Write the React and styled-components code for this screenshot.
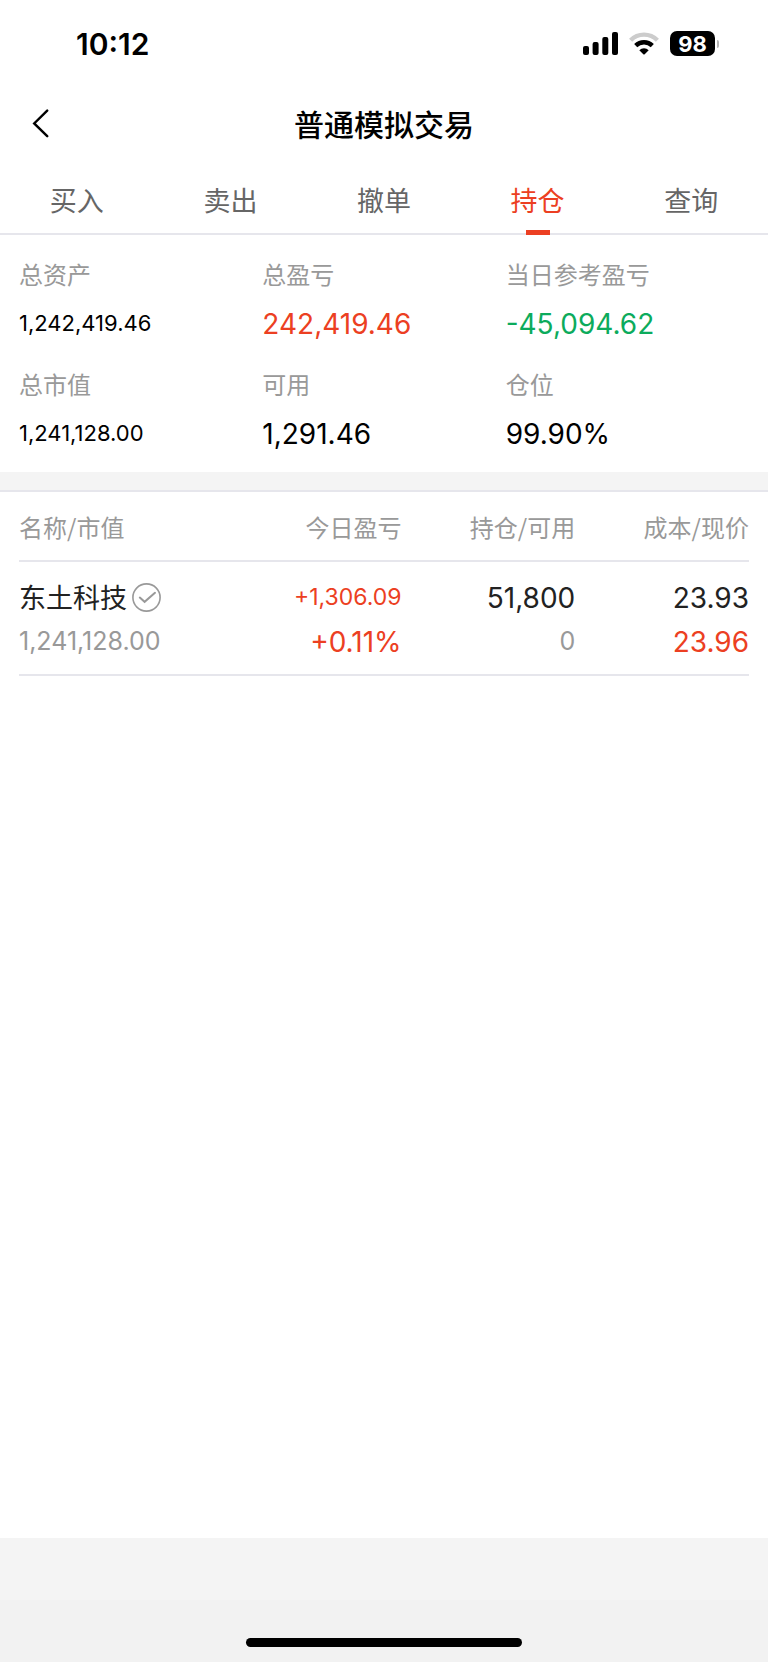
import React, { useState } from 'react';
import styled, { createGlobalStyle } from 'styled-components';

const colors = {
	red: '#ec3f22',
	green: '#0cab5c',
	line: '#e6e6ec',
	band: '#f4f4f4',
	gray: '#999',
	dark: '#222',
};

const GlobalStyle = createGlobalStyle`
	* {
		box-sizing: border-box;
	}

	body {
		margin: 0;
		background: #fff;
		font-family: Inter, 'Noto Sans CJK SC', sans-serif;
	}

	button {
		padding: 0;
		border: 0;
		background: none;
		font: inherit;
		color: inherit;
		cursor: pointer;
	}
`;

const Page = styled.div`
	display: flex;
	flex-direction: column;
	min-height: 100vh;
	color: #000;
`;

const StatusBar = styled.div`
	display: flex;
	align-items: center;
	justify-content: space-between;
	height: 87px;
	padding: 0 49px 0 76px;
`;

const Time = styled.span`
	font-size: 30px;
	font-weight: 600;
	line-height: 40px;
`;

const StatusIcons = styled.div`
	display: flex;
	align-items: center;
	gap: 11px;
`;

const Battery = styled.div`
	display: flex;
	align-items: center;
	gap: 2px;
`;

const BatteryLevel = styled.span`
	width: 45px;
	height: 25px;
	border-radius: 7px;
	background: #000;
	color: #fff;
	font-size: 22px;
	font-weight: 700;
	line-height: 26px;
	text-align: center;
`;

const BatteryTip = styled.span`
	width: 2px;
	height: 8px;
	border-radius: 0 2px 2px 0;
	background: #b4b4b4;
`;

const NavBar = styled.header`
	display: grid;
	grid-template-columns: 1fr auto 1fr;
	align-items: center;
	height: 76px;
	padding: 0 31px;
`;

const BackButton = styled.button`
	display: flex;
	justify-self: start;
`;

const Title = styled.h1`
	margin: 0;
	font-size: 30px;
	font-weight: 500;
	line-height: 40px;
`;

const Tabs = styled.nav`
	display: flex;
	border-bottom: 2px solid ${colors.line};
`;

const Tab = styled.button`
	position: relative;
	flex: 1;
	padding: 19px 0 11px;
	font-size: 27px;
	line-height: 40px;
	color: ${(props) => (props.$active ? colors.red : '#666')};

	&::after {
		content: '';
		display: ${(props) => (props.$active ? 'block' : 'none')};
		position: absolute;
		bottom: -2px;
		left: 50%;
		width: 24px;
		height: 5px;
		margin-left: -12px;
		background: ${colors.red};
	}
`;

const Summary = styled.dl`
	display: grid;
	grid-template-columns: repeat(3, 1fr);
	row-gap: 14px;
	margin: 0;
	padding: 19px 19px 12px;
`;

const Label = styled.dt`
	font-size: 24px;
	line-height: 44px;
	color: ${colors.gray};
`;

const Value = styled.dd`
	height: 52px;
	margin: 0;
	font-size: ${(props) => (props.$small ? 22 : 28)}px;
	line-height: ${(props) => (props.$small ? 50 : 52)}px;
	color: ${(props) => props.$color || '#000'};
`;

const Band = styled.div`
	height: 20px;
	border-bottom: 2px solid ${colors.line};
	background: ${colors.band};
`;

const Holdings = styled.main`
	flex: 1;
	padding: 0 19px;
`;

const Table = styled.table`
	width: 100%;
	border-collapse: separate;
	border-spacing: 0;
	table-layout: fixed;
`;

const HeadCell = styled.th`
	width: ${(props) => props.$width};
	padding: 13px 0 11px;
	border-bottom: 2px solid ${colors.line};
	font-family: 'Noto Sans CJK SC', sans-serif;
	font-size: 24px;
	font-weight: 400;
	line-height: 44px;
	color: ${colors.gray};
	text-align: right;

	&:first-child {
		text-align: left;
	}
`;

const Cell = styled.td`
	padding: 13px 0 11px;
	border-bottom: 2px solid ${colors.line};
	text-align: right;

	&:first-child {
		text-align: left;
	}
`;

const Line = styled.div`
	height: 44px;
	font-size: ${(props) => props.$size || 28}px;
	line-height: ${(props) => (props.$size ? 44 : 46)}px;
	color: ${(props) => props.$color || colors.dark};
`;

const StockName = styled.div`
	display: flex;
	gap: 5px;
	height: 44px;
	font-size: 27px;
	line-height: 48px;
	color: ${colors.dark};

	svg {
		align-self: center;
	}
`;

const Footer = styled.footer`
	padding-top: 62px;
	background: ${colors.band};
`;

const HomeArea = styled.div`
	display: flex;
	justify-content: center;
	align-items: flex-end;
	height: 62px;
	padding-bottom: 15px;
	background: #f2f2f2;
`;

const HomeIndicator = styled.div`
	width: 36%;
	height: 9px;
	border-radius: 5px;
	background: #000;
`;

const tabs = ['买入', '卖出', '撤单', '持仓', '查询'];

const summary = [
	{ label: '总资产', value: '1,242,419.46', small: true },
	{ label: '总盈亏', value: '242,419.46', color: colors.red },
	{ label: '当日参考盈亏', value: '-45,094.62', color: colors.green },
	{ label: '总市值', value: '1,241,128.00', small: true },
	{ label: '可用', value: '1,291.46' },
	{ label: '仓位', value: '99.90%' },
];

const holdings = [
	{
		name: '东土科技',
		marketValue: '1,241,128.00',
		profit: '+1,306.09',
		rate: '+0.11%',
		amount: '51,800',
		available: '0',
		cost: '23.93',
		price: '23.96',
	},
];

const SignalIcon = () => (
	<svg width='35' height='23' viewBox='0 0 35 23' aria-hidden='true'>
		<rect x='0' y='14' width='6' height='9' rx='2' />
		<rect x='9.6' y='10' width='6' height='13' rx='2' />
		<rect x='19.3' y='5' width='6' height='18' rx='2' />
		<rect x='29' y='0' width='6' height='23' rx='2' />
	</svg>
);

const WifiIcon = () => (
	<svg width='30' height='23' viewBox='0 0 30 23' fill='none' aria-hidden='true'>
		<path d='M1.6 8.2A19 19 0 0 1 28.4 8.2' stroke='#ccc' strokeWidth='4.4' />
		<path d='M6.7 13.6A11.8 11.8 0 0 1 23.3 13.6' stroke='#000' strokeWidth='4.4' />
		<path
			d='M10.3 18.2A6.8 6.8 0 0 1 19.7 18.2L15.7 22.2Q15 22.9 14.3 22.2Z'
			fill='#000'
		/>
	</svg>
);

const CheckIcon = () => (
	<svg
		width='29'
		height='29'
		viewBox='0 0 29 29'
		fill='none'
		stroke='#999'
		aria-hidden='true'>
		<circle cx='14.5' cy='14.5' r='13.6' strokeWidth='1.6' />
		<path d='M7.8 14.6L12.6 18.8L23 9.8' strokeWidth='2' strokeLinecap='round' />
	</svg>
);

const App = () => {
	const [active, setActive] = useState('持仓');

	return (
		<Page>
			<GlobalStyle />
			<StatusBar>
				<Time>10:12</Time>
				<StatusIcons>
					<SignalIcon />
					<WifiIcon />
					<Battery>
						<BatteryLevel>98</BatteryLevel>
						<BatteryTip />
					</Battery>
				</StatusIcons>
			</StatusBar>

			<NavBar>
				<BackButton type='button' aria-label='返回'>
					<svg width='18' height='32' viewBox='0 0 18 32' fill='none'>
						<path
							d='M16.2 1.6L3.2 14.4L16.2 27.2'
							stroke='#000'
							strokeWidth='2.4'
							strokeLinecap='round'
						/>
					</svg>
				</BackButton>
				<Title>普通模拟交易</Title>
			</NavBar>

			<Tabs>
				{tabs.map((tab) => (
					<Tab
						key={tab}
						type='button'
						$active={tab === active}
						onClick={() => setActive(tab)}>
						{tab}
					</Tab>
				))}
			</Tabs>

			<Summary>
				{summary.map((item) => (
					<div key={item.label}>
						<Label>{item.label}</Label>
						<Value $small={item.small} $color={item.color}>
							{item.value}
						</Value>
					</div>
				))}
			</Summary>
			<Band />

			<Holdings>
				<Table>
					<thead>
						<tr>
							<HeadCell $width='28%'>名称/市值</HeadCell>
							<HeadCell>今日盈亏</HeadCell>
							<HeadCell $width='23.8%'>持仓/可用</HeadCell>
							<HeadCell $width='23.8%'>成本/现价</HeadCell>
						</tr>
					</thead>
					<tbody>
						{holdings.map((stock) => (
							<tr key={stock.name}>
								<Cell>
									<StockName>
										{stock.name}
										<CheckIcon />
									</StockName>
									<Line $size={25} $color={colors.gray}>
										{stock.marketValue}
									</Line>
								</Cell>
								<Cell>
									<Line $size={23} $color={colors.red}>
										{stock.profit}
									</Line>
									<Line $color={colors.red}>{stock.rate}</Line>
								</Cell>
								<Cell>
									<Line>{stock.amount}</Line>
									<Line $size={25} $color={colors.gray}>
										{stock.available}
									</Line>
								</Cell>
								<Cell>
									<Line>{stock.cost}</Line>
									<Line $color={colors.red}>{stock.price}</Line>
								</Cell>
							</tr>
						))}
					</tbody>
				</Table>
			</Holdings>

			<Footer>
				<HomeArea>
					<HomeIndicator />
				</HomeArea>
			</Footer>
		</Page>
	);
};

export default App;
